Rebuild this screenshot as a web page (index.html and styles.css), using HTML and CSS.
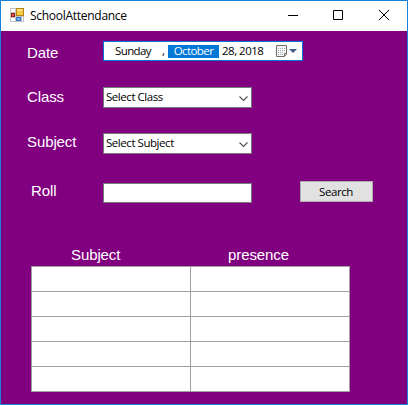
FILE: index.html
```html
<!DOCTYPE html>
<html lang="en">
<head>
<meta charset="utf-8">
<title>SchoolAttendance</title>
<link rel="stylesheet" href="styles.css">
</head>
<body>
<div class="window">
  <header class="titlebar">
    <svg class="app-icon" width="14" height="14" viewBox="0 0 14 14" shape-rendering="crispEdges">
      <path fill="#c4c4c4" d="M0 0h6v14H0zM6 8h8v6H6z"/>
      <path fill="#fff" d="M1 1h4v3H1zM1 10h4v3H1zM12 9h1v4h-1z"/>
      <path fill="#9c1c14" d="M1 5h4v4H1z"/><path fill="#dc5a48" d="M2 6h2v2H2z"/>
      <path fill="#b88410" d="M6 0h8v8H6z"/><path fill="#f8cc48" d="M7 1h6v6H7z"/><path fill="#fce48c" d="M7 1h5v2H7z"/>
      <path fill="#3474c8" d="M6 9h5v4H6z"/><path fill="#78b0f0" d="M7 10h3v2H7z"/>
    </svg>
    <span class="title">SchoolAttendance</span>
    <svg class="controls" width="111" height="12" viewBox="0 0 111 12" fill="none" stroke="#000">
      <path d="M1 5.5h10M46.5 .5h9v9h-9z"/>
      <path d="M92 0l10 10M102 0L92 10"/>
    </svg>
  </header>
  <main class="form">
    <div class="row row-date">
      <label class="label date-label">Date</label>
      <div class="datepicker">
        <span class="weekday">Sunday</span><span class="comma">,</span><span class="month">October</span><span class="day">28, 2018</span>
        <svg width="21" height="13" viewBox="0 0 21 13">
          <path d="M.5 .5h10v9l-2 2h-8z" fill="#f6f6f6" stroke="#766a68"/>
          <path d="M10.500 8.500h-2v3" fill="#ddd" stroke="#766a68"/>
          <path d="M2 3.500h7M2 5.500h7M2 7.500h6M2 9.500h5" stroke="#a4acb8" stroke-dasharray="1 1"/>
          <path d="M13 4h8l-4 4z" fill="#435a88"/>
        </svg>
      </div>
    </div>
    <div class="row row-class">
      <label class="label class-label">Class</label>
      <div class="combo"><span>Select Class</span><svg width="9" height="6" viewBox="0 0 9 6"><path d="M.5.5l4 4 4-4" fill="none" stroke="#555" stroke-width="1.2"/></svg></div>
    </div>
    <div class="row row-subject">
      <label class="label">Subject</label>
      <div class="combo"><span>Select Subject</span><svg width="9" height="6" viewBox="0 0 9 6"><path d="M.5.5l4 4 4-4" fill="none" stroke="#555" stroke-width="1.2"/></svg></div>
    </div>
    <div class="row row-roll">
      <label class="label roll-label" for="roll">Roll</label>
      <input class="textbox" id="roll" type="text">
      <button class="search" type="button">Search</button>
    </div>
    <div class="headings"><span class="head-subject">Subject</span><span>presence</span></div>
    <div class="grid">
      <i></i><i></i><i></i><i></i><i></i><i></i><i></i><i></i><i></i><i></i>
    </div>
  </main>
</div>
</body>
</html>
```

FILE: styles.css
```css
* { box-sizing: border-box; }
body { margin: 0; overflow: hidden; }
.window {
  width: 408px;
  height: 405px;
  border: 1px solid #1883d7;
  background: #800080;
  font: 11.5px/16px "Open Sans", "Noto Sans", sans-serif;
  letter-spacing: -0.45px;
  color: #000;
}
.titlebar {
  display: flex;
  height: 30px;
  background: #fff;
}
.app-icon { margin: 7px 0 0 9px; }
.title {
  width: 100px;
  margin: 7px 0 0 6px;
  font-size: 12px;
  letter-spacing: -0.28px;
  white-space: nowrap;
}
.controls { margin: 9px 0 0 157px; }
.form { padding: 10px 0 0 26px; }
.row { display: flex; align-items: flex-start; }
.row-date { height: 46px; }
.row-class { height: 46px; }
.row-subject { height: 48px; }
.row-roll { height: 65px; }
.label, .headings {
  font: 15px/18px "Liberation Sans", Arial, sans-serif;
  letter-spacing: -0.1px;
  color: #fff;
}
.label { width: 76px; flex: none; }
.date-label { margin-top: 3px; }
.class-label { margin-top: 1px; }
.roll-label { margin-top: 1px; padding-left: 4px; }
.datepicker {
  display: flex;
  align-items: center;
  width: 200px;
  height: 20px;
  padding-left: 11px;
  border: 1px solid #0078d7;
  background: #fff;
  letter-spacing: -0.25px;
  white-space: nowrap;
}
.weekday { width: 47px; letter-spacing: -0.6px; }
.comma { width: 6px; }
.month {
  width: 51px;
  height: 13px;
  line-height: 12px;
  text-align: center;
  letter-spacing: -0.6px;
  background: #0078d7;
  color: #fff;
}
.day { width: 54px; padding-left: 3px; letter-spacing: -0.5px; }
.datepicker svg { margin: 1px 0 0 3px; }
.combo {
  display: flex;
  align-items: center;
  justify-content: space-between;
  width: 149px;
  height: 21px;
  padding: 0 3px 0 2px;
  border: 1px solid #7a7a7a;
  background: #fff;
}
.combo span { margin-top: -1px; }
.combo svg { margin-top: 2px; }
.textbox {
  width: 149px;
  height: 20px;
  margin: 2px 0 0;
  padding: 0 2px;
  border: 1px solid #7a7a7a;
  background: #fff;
  font: inherit;
}
.search {
  width: 73px;
  height: 21px;
  margin-left: 48px;
  padding: 0 1px 0 0;
  border: 1px solid #adadad;
  background: #e1e1e1;
  font: inherit;
  letter-spacing: -0.4px;
  color: #000;
}
.headings { display: flex; height: 20px; padding-left: 44px; }
.head-subject { width: 157px; }
.grid {
  display: grid;
  grid-template-columns: 159px 159px;
  grid-auto-rows: 25px;
  width: 319px;
  margin-left: 4px;
  border: solid #a0a0a0;
  border-width: 1px 0 0 1px;
}
.grid i {
  border: solid #a0a0a0;
  border-width: 0 1px 1px 0;
  background: #fff;
}
```
